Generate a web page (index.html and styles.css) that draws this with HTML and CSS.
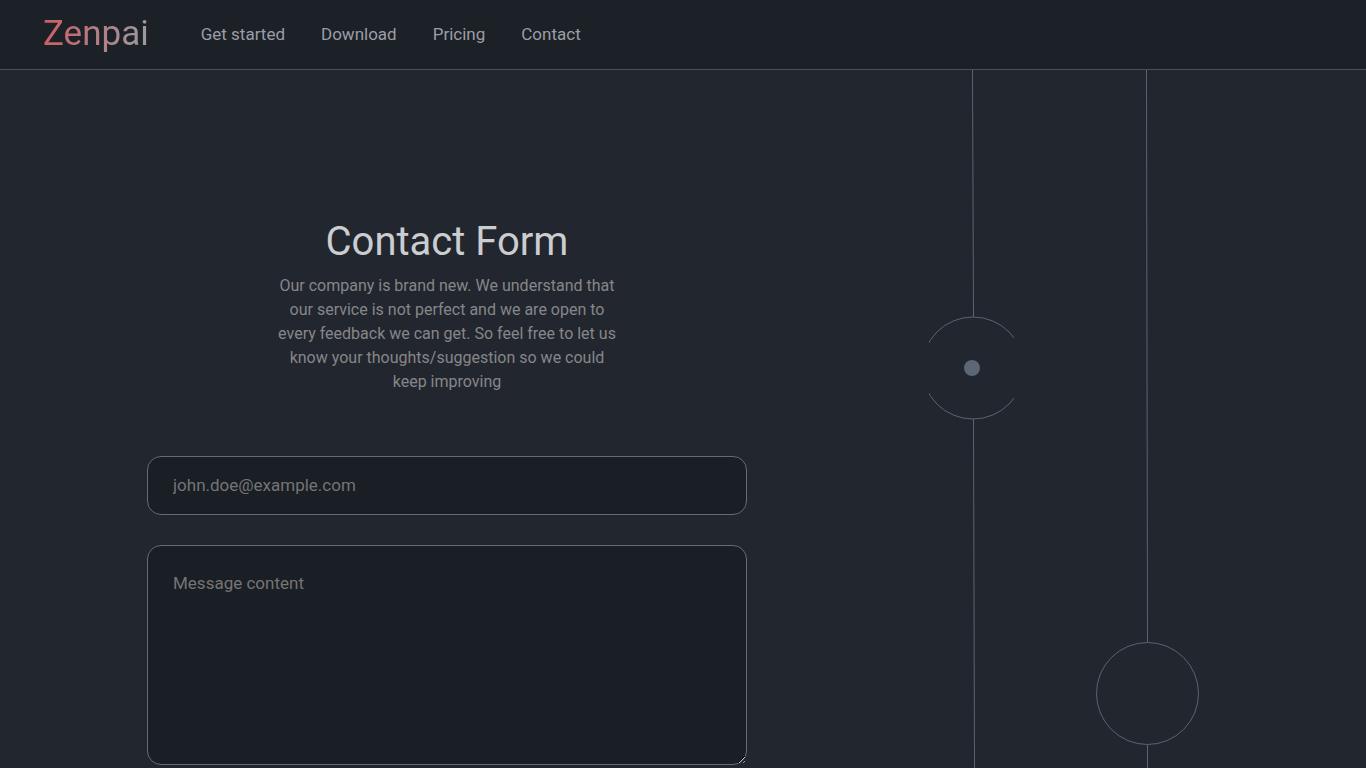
FILE: index.html
```html
<!DOCTYPE html>
<html lang="en">
<head>
  <meta charset="utf-8">
  <meta name="viewport" content="width=device-width, initial-scale=1">
  <title>Zenpai</title>
  <link rel="stylesheet" href="styles.css">
</head>
<body>
  <header class="navbar">
    <a class="brand" href="#">Zenpai</a>
    <nav class="nav-links">
      <a href="#">Get started</a>
      <a href="#">Download</a>
      <a href="#">Pricing</a>
      <a href="#">Contact</a>
    </nav>
  </header>
  <main class="page">
    <section class="contact">
      <h1 class="title">Contact Form</h1>
      <p class="intro">Our company is brand new. We understand that our service is not perfect and we are open to every feedback we can get. So feel free to let us know your thoughts/suggestion so we could keep improving</p>
      <form class="form">
        <input class="field email" type="email" aria-label="Email" placeholder="john.doe@example.com">
        <textarea class="field message" aria-label="Message" placeholder="Message content"></textarea>
      </form>
    </section>
    <div class="art" aria-hidden="true">
      <svg class="art-svg" viewBox="0 0 472 698" preserveAspectRatio="xMidYMin slice">
        <defs>
          <clipPath id="sides"><rect x="35" y="240" width="85" height="120"/></clipPath>
        </defs>
        <g fill="none" stroke="#5d636e">
          <path d="M78.500 0L79.500 247M79.500 349L80.500 698"/>
          <circle cx="79" cy="298" r="51" clip-path="url(#sides)"/>
          <path d="M252.500 0L253.500 572M253.500 675V698"/>
          <circle cx="253.500" cy="623.500" r="51"/>
        </g>
        <circle cx="78" cy="298" r="8" fill="#5c6675"/>
      </svg>
    </div>
  </main>
</body>
</html>
```

FILE: styles.css
```css
* {
  box-sizing: border-box;
}

body {
  margin: 0;
  min-height: 100vh;
  display: flex;
  flex-direction: column;
  background: #22262e;
  color: #cccdd0;
  font-family: Roboto, sans-serif;
}

.navbar {
  display: flex;
  align-items: center;
  gap: 52px;
  height: 70px;
  padding: 0 43px 2px;
  background: #1c2027;
  border-bottom: 1px solid #4c5159;
}

.brand {
  font-size: 35px;
  line-height: 40px;
  text-decoration: none;
  color: transparent;
  background: linear-gradient(90deg, #cc5f65, #9b9b9f);
  background-clip: text;
}

.nav-links {
  display: flex;
  gap: 36px;
}

.nav-links a {
  color: #9a9ea6;
  font-size: 17px;
  line-height: 24px;
  text-decoration: none;
}

.page {
  flex: 1;
  display: grid;
  grid-template-columns: 894fr 472fr;
}

.contact {
  display: flex;
  flex-direction: column;
  align-items: center;
  padding: 148px 24px 3px;
}

.title {
  margin: 0;
  font-size: 40px;
  font-weight: 400;
  line-height: 48px;
}

.intro {
  max-width: 350px;
  margin: 8px 0 62px;
  color: #868789;
  font-size: 16px;
  line-height: 24px;
  text-align: center;
}

.form {
  display: flex;
  flex-direction: column;
  gap: 30px;
  width: 100%;
  max-width: 600px;
}

.field {
  width: 100%;
  padding: 25px;
  border: 1px solid #666a71;
  border-radius: 14px;
  background: #1a1e25;
  color: #cccdd0;
  font-family: inherit;
  font-size: 17px;
  line-height: 24px;
}

.field::placeholder {
  color: #757575;
}

.email {
  height: 59px;
  padding: 0 25px 2px;
}

.message {
  display: block;
  height: 220px;
}

.art {
  overflow: hidden;
}

.art-svg {
  display: block;
  width: 100%;
  height: 100%;
}
```
